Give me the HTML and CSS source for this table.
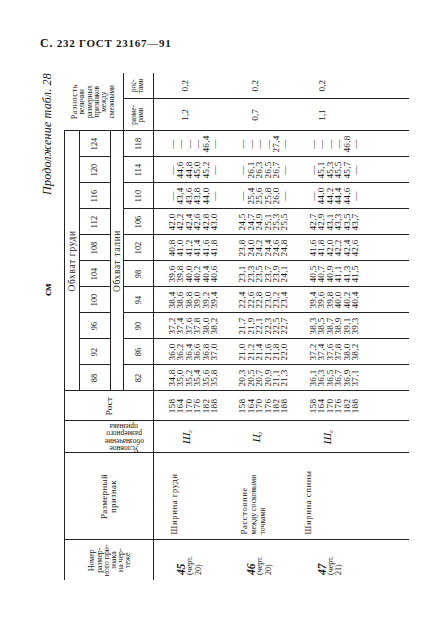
FILE: index.html
```html
<!DOCTYPE html>
<html lang="ru">
<head>
<meta charset="utf-8">
<title>ГОСТ 23167—91, с. 232</title>
<link rel="stylesheet" href="styles.css">
</head>
<body>
<div class="page-head"><span class="c">С.</span> 232 ГОСТ 23167—91</div>
<div class="rot-wrap">
  <div class="rot">
    <div class="caption">
      <span class="unit">см</span>
      <span class="cont">Продолжение табл. 28</span>
    </div>
    <table class="t">
      <colgroup>
        <col class="w-num"><col class="w-name"><col class="w-sym"><col class="w-rost">
        <col class="w-d"><col class="w-d"><col class="w-d"><col class="w-d"><col class="w-d">
        <col class="w-d"><col class="w-d"><col class="w-d"><col class="w-d"><col class="w-d">
        <col class="w-r1"><col class="w-r2">
      </colgroup>
      <thead>
        <tr class="ha">
          <th class="h-side" rowspan="4"><div class="h-num">Номер<br>размер-<br>ного при-<br>знака<br>на чер-<br>теже</div></th>
          <th class="h-side" rowspan="4"><div class="h-name">Размерный<br>признак</div></th>
          <th class="h-side h-symc" rowspan="4"><div class="vt">Условное<br>обозначение<br>размерного<br>признака</div></th>
          <th class="h-side" rowspan="4"><div class="h-rost">Рост</div></th>
          <th class="h-grp" colspan="10">Обхват груди</th>
          <th class="h-diff" colspan="2" rowspan="3"><div class="diff-t"><span class="big">Разность</span><br>величин<br>размерных<br>признаков<br>между<br>смежными</div></th>
        </tr>
        <tr class="hb">
          <th class="h-n">88</th><th class="h-n">92</th><th class="h-n">96</th><th class="h-n">100</th><th class="h-n">104</th>
          <th class="h-n">108</th><th class="h-n">112</th><th class="h-n">116</th><th class="h-n">120</th><th class="h-n">124</th>
        </tr>
        <tr class="hc">
          <th class="h-grp" colspan="10">Обхват талии</th>
        </tr>
        <tr class="hd">
          <th class="h-n2">82</th><th class="h-n2">86</th><th class="h-n2">90</th><th class="h-n2">94</th><th class="h-n2">98</th>
          <th class="h-n2">102</th><th class="h-n2">106</th><th class="h-n2">110</th><th class="h-n2">114</th><th class="h-n2">118</th>
          <th class="h-n2 h-sub">разме-<br>рами</th>
          <th class="h-n2 h-sub last">рос-<br>тами</th>
        </tr>
      </thead>
      <tbody>
        <tr class="row">
          <td class="c-num"><div class="rn">45</div><div class="rc">(черт.<br>20)</div></td>
          <td class="c-name"><div class="nm"><span class="nm1">Ширина груди</span></div></td>
          <td class="c-sym"><div class="sym">Ш<sub>г</sub></div></td>
          <td class="v">158<br>164<br>170<br>176<br>182<br>188</td>
          <td class="v">34,8<br>35,0<br>35,2<br>35,4<br>35,6<br>35,8</td>
          <td class="v">36,0<br>36,2<br>36,4<br>36,6<br>36,8<br>37,0</td>
          <td class="v">37,2<br>37,4<br>37,6<br>37,8<br>38,0<br>38,2</td>
          <td class="v">38,4<br>38,6<br>38,8<br>39,0<br>39,2<br>39,4</td>
          <td class="v">39,6<br>39,8<br>40,0<br>40,2<br>40,4<br>40,6</td>
          <td class="v">40,8<br>41,0<br>41,2<br>41,4<br>41,6<br>41,8</td>
          <td class="v">42,0<br>42,2<br>42,4<br>42,6<br>42,8<br>43,0</td>
          <td class="v">—<br>43,4<br>43,6<br>43,8<br>44,0<br>—</td>
          <td class="v">—<br>44,6<br>44,8<br>45,0<br>45,2<br>—</td>
          <td class="v">—<br>—<br>—<br>—<br>46,4<br>—</td>
          <td class="c-d"><div class="dv">1,2</div></td>
          <td class="c-d last"><div class="dv">0,2</div></td>
        </tr>
        <tr class="row">
          <td class="c-num"><div class="rn">46</div><div class="rc">(черт.<br>20)</div></td>
          <td class="c-name"><div class="nm"><span class="nm1">Расстояние</span><br>между сосковыми<br>точками</div></td>
          <td class="c-sym"><div class="sym">Ц<sub>г</sub></div></td>
          <td class="v">158<br>164<br>170<br>176<br>182<br>188</td>
          <td class="v">20,3<br>20,5<br>20,7<br>20,9<br>21,1<br>21,3</td>
          <td class="v">21,0<br>21,2<br>21,4<br>21,6<br>21,8<br>22,0</td>
          <td class="v">21,7<br>21,9<br>22,1<br>22,3<br>22,5<br>22,7</td>
          <td class="v">22,4<br>22,6<br>22,8<br>23,0<br>23,2<br>23,4</td>
          <td class="v">23,1<br>23,3<br>23,5<br>23,7<br>23,9<br>24,1</td>
          <td class="v">23,8<br>24,0<br>24,2<br>24,4<br>24,6<br>24,8</td>
          <td class="v">24,5<br>24,7<br>24,9<br>25,1<br>25,3<br>25,5</td>
          <td class="v">—<br>25,4<br>25,6<br>25,8<br>26,0<br>—</td>
          <td class="v">—<br>26,1<br>26,3<br>26,5<br>26,7<br>—</td>
          <td class="v">—<br>—<br>—<br>—<br>27,4<br>—</td>
          <td class="c-d"><div class="dv">0,7</div></td>
          <td class="c-d last"><div class="dv">0,2</div></td>
        </tr>
        <tr class="row">
          <td class="c-num"><div class="rn">47</div><div class="rc">(черт.<br>21)</div></td>
          <td class="c-name"><div class="nm nm-up"><span class="nm1">Ширина спины</span></div></td>
          <td class="c-sym"><div class="sym">Ш<sub>с</sub></div></td>
          <td class="v">158<br>164<br>170<br>176<br>182<br>188</td>
          <td class="v">36,1<br>36,3<br>36,5<br>36,7<br>36,9<br>37,1</td>
          <td class="v">37,2<br>37,4<br>37,6<br>37,8<br>38,0<br>38,2</td>
          <td class="v">38,3<br>38,5<br>38,7<br>38,9<br>39,1<br>39,3</td>
          <td class="v">39,4<br>39,6<br>39,8<br>40,0<br>40,2<br>40,4</td>
          <td class="v">40,5<br>40,7<br>40,9<br>41,1<br>41,3<br>41,5</td>
          <td class="v">41,6<br>41,8<br>42,0<br>42,2<br>42,4<br>42,6</td>
          <td class="v">42,7<br>42,9<br>43,1<br>43,3<br>43,5<br>43,7</td>
          <td class="v">—<br>44,0<br>44,2<br>44,4<br>44,6<br>—</td>
          <td class="v">—<br>45,1<br>45,3<br>45,5<br>45,7<br>—</td>
          <td class="v">—<br>—<br>—<br>—<br>46,8<br>—</td>
          <td class="c-d"><div class="dv dv-up">1,1</div></td>
          <td class="c-d last"><div class="dv dv-up">0,2</div></td>
        </tr>
        <tr class="fill">
          <td></td><td></td><td></td><td></td><td></td><td></td><td></td><td></td>
          <td></td><td></td><td></td><td></td><td></td><td></td><td></td><td class="last"></td>
        </tr>
      </tbody>
    </table>
  </div>
</div>
</body>
</html>
```
FILE: styles.css
```css
html, body {
  margin: 0;
  padding: 0;
  background: #ffffff;
}

body {
  color: #161616;
  font-family: "Liberation Serif", "DejaVu Serif", serif;
}

.page-head {
  margin: 37px 0 0 40px;
  font-size: 11px;
  line-height: 12px;
  font-weight: bold;
  letter-spacing: 0.75px;
  white-space: nowrap;
}

.page-head .c {
  font-size: 12px;
}

/* the page is printed sideways: the table is built upright, then turned */
.rot-wrap {
  width: 370px;
  height: 507px;
  margin: 24px 0 0 38px;
}

.rot {
  width: 507px;
  height: 370px;
  transform-origin: 0 0;
  transform: translateY(507px) rotate(-90deg);
}

.caption {
  box-sizing: border-box;
  height: 26px;
  padding-top: 2px;
  display: flex;
  align-items: flex-start;
  white-space: nowrap;
}

.caption .unit {
  margin-left: 284px;
  font-size: 11px;
  line-height: 14px;
  font-weight: bold;
}

.caption .cont {
  margin-left: auto;
  font-size: 12px;
  line-height: 14px;
  font-style: italic;
  letter-spacing: 0.2px;
}

/* table */
.t {
  border-collapse: collapse;
  table-layout: fixed;
  width: 507px;
}

.w-num { width: 40px; }
.w-name { width: 87px; }
.w-sym { width: 32px; }
.w-rost { width: 30px; }
.w-d { width: 26px; }
.w-r1 { width: 32px; }
.w-r2 { width: 26px; }

.t th,
.t td {
  padding: 0;
  border: 0 solid #222;
  font-weight: normal;
  text-align: center;
  vertical-align: middle;
}

.ha { height: 14.5px; }
.hb { height: 31px; }
.hc { height: 13px; }
.hd { height: 30.5px; }

.ha th {
  border-top: 1.7px solid #222;
}

.h-side {
  border-right-width: 1px !important;
  border-bottom: 1.5px solid #222 !important;
}

.h-num {
  font-size: 7.8px;
  line-height: 7.2px;
  padding-top: 2px;
}

.h-name {
  font-size: 9px;
  line-height: 8.8px;
  letter-spacing: 0.3px;
}

.h-symc {
  vertical-align: bottom !important;
}

.vt {
  writing-mode: vertical-rl;
  transform: rotate(180deg);
  height: 54px;
  margin: 0 auto 2px;
  font-size: 7.4px;
  line-height: 7.3px;
  text-align: center;
}

.h-rost {
  font-size: 9px;
  letter-spacing: 0.3px;
}

.h-grp {
  font-size: 9.4px;
  line-height: 10px;
  letter-spacing: 0.7px;
  border-bottom-width: 1px !important;
  border-right-width: 1px !important;
}

.h-n {
  font-size: 8.4px;
  border-left-width: 1px !important;
  border-right-width: 1px !important;
  border-bottom-width: 1px !important;
}

.h-n2 {
  font-size: 8.4px;
  border-left-width: 1px !important;
  border-right-width: 1px !important;
  border-bottom: 1.5px solid #222 !important;
}

.h-sub {
  font-size: 7.2px;
  line-height: 7.3px;
}

.h-diff {
  border-left-width: 1px !important;
  border-bottom-width: 1px !important;
  border-top: 0 !important;
}

.diff-t {
  font-size: 7.2px;
  line-height: 7.3px;
}

.diff-t .big {
  font-size: 8.4px;
  letter-spacing: 0.4px;
}

.t .last {
  border-right-width: 0 !important;
}

/* body rows */
.row td {
  border-right-width: 1px;
  vertical-align: top;
}

.fill { height: 44px; }

.fill td {
  border-right-width: 1px;
}

.v {
  padding-top: 14px !important;
  padding-bottom: 6px !important;
  font-size: 9.2px;
  line-height: 8.4px;
  letter-spacing: 0.2px;
  white-space: nowrap;
}

.c-num {
  text-align: left !important;
  padding-left: 5px !important;
}

.rn {
  margin-top: 22px;
  font-size: 11.5px;
  line-height: 10px;
  font-weight: bold;
  font-style: italic;
}

.rc {
  font-size: 8px;
  line-height: 8.5px;
}

.c-name {
  text-align: left !important;
  padding-left: 5px !important;
}

.nm {
  margin-top: 16px;
  font-size: 7.8px;
  line-height: 9px;
  white-space: nowrap;
}

.nm-up {
  margin-top: 9px;
}

.nm .nm1 {
  font-size: 8.8px;
  letter-spacing: 0.55px;
}

.sym {
  margin-top: 27px;
  font-size: 11px;
  line-height: 10px;
  font-style: italic;
}

.sym sub {
  font-size: 7px;
  vertical-align: -2px;
  line-height: 0;
}

.dv {
  margin-top: 27px;
  font-size: 9.2px;
  line-height: 9px;
}

.dv-up {
  margin-top: 23px;
}
```
